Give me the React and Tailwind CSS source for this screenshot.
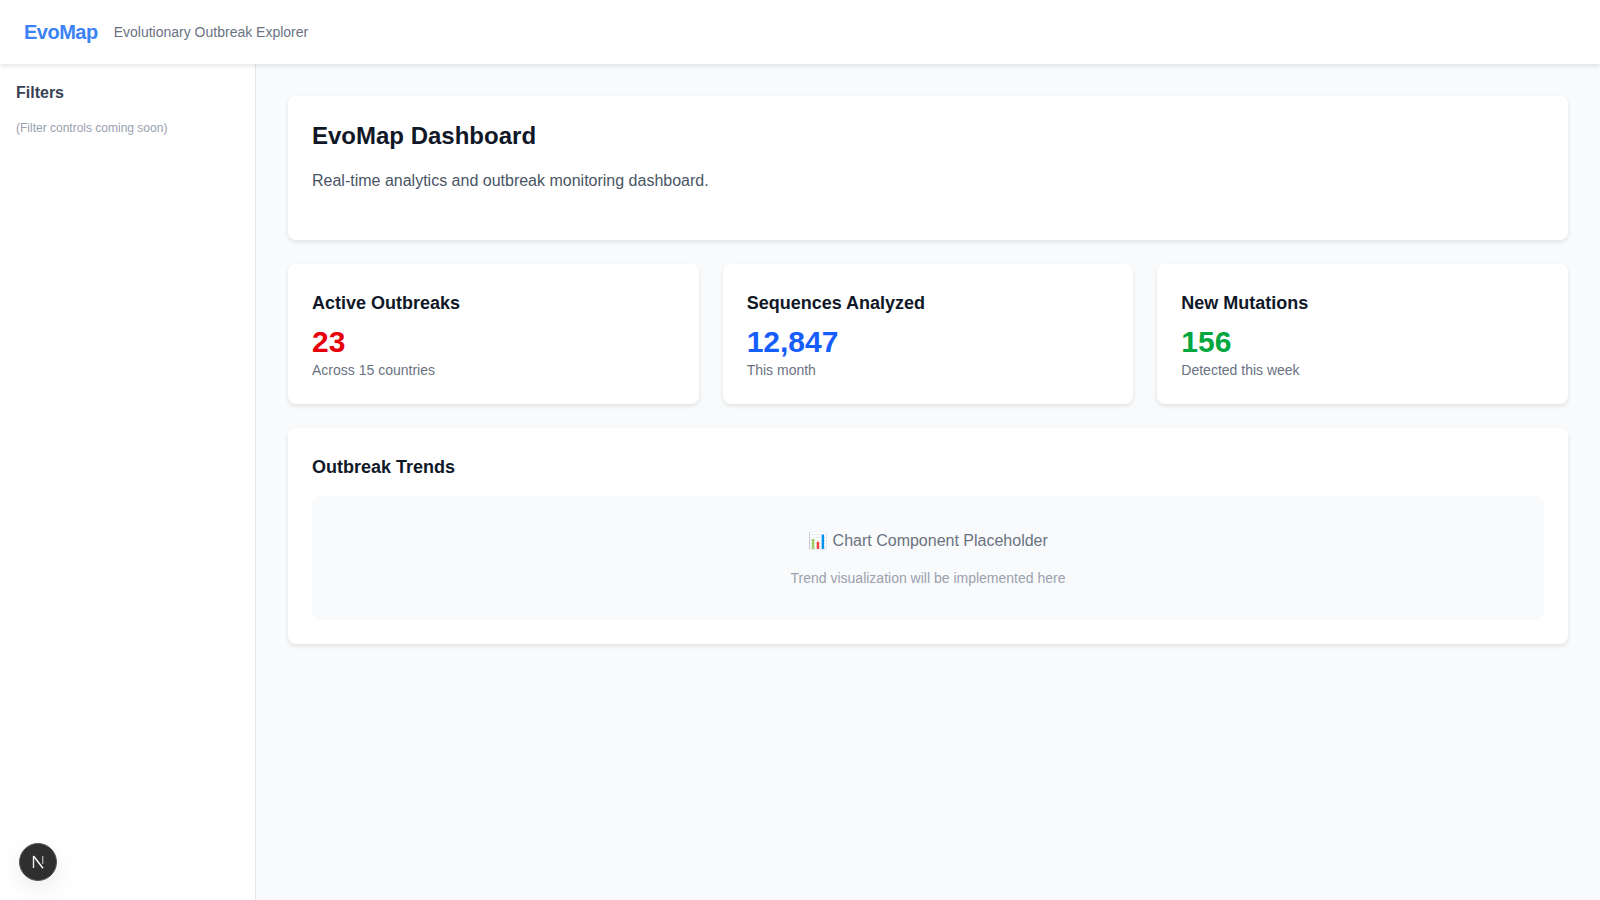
const stats = [
  { title: "Active Outbreaks", value: "23", note: "Across 15 countries", color: "text-red-600" },
  { title: "Sequences Analyzed", value: "12,847", note: "This month", color: "text-blue-600" },
  { title: "New Mutations", value: "156", note: "Detected this week", color: "text-green-600" },
];

const card = "bg-white rounded-lg shadow-[0_2px_4px_rgba(0,0,0,0.1)] p-6";

export default function App() {
  return (
    <div className="min-h-screen flex flex-col bg-gray-50 antialiased font-['Liberation_Sans',Arial,sans-serif]">
      {/* HEADER */}
      <header className="relative z-10 h-16 bg-white shadow-[0_2px_4px_rgba(0,0,0,0.1)] flex items-center px-6 gap-4 shrink-0">
        <h1 className="text-xl font-bold tracking-tight text-[#3b82f6]">EvoMap</h1>
        <span className="text-sm text-gray-500">Evolutionary Outbreak Explorer</span>
      </header>

      <div className="flex flex-1">
        {/* SIDEBAR */}
        <aside className="w-64 shrink-0 bg-white border-r border-gray-200 p-4">
          <h2 className="text-base leading-[26px] font-semibold text-gray-700 mb-[14px]">Filters</h2>
          <p className="text-xs text-gray-400">(Filter controls coming soon)</p>
        </aside>

        {/* MAIN */}
        <main className="flex-1 p-8 flex flex-col gap-6">
          <section className={card}>
            <h2 className="text-2xl font-bold text-gray-900 mb-4">EvoMap Dashboard</h2>
            <p className="leading-[26px] text-gray-600 mb-[22px]">Real-time analytics and outbreak monitoring dashboard.</p>
          </section>

          <div className="grid grid-cols-3 gap-6">
            {stats.map((s) => (
              <div key={s.title} className={card}>
                <h3 className="text-lg leading-[30px] font-semibold text-gray-900 mb-[6px]">{s.title}</h3>
                <p className={`text-3xl font-bold ${s.color}`}>{s.value}</p>
                <p className="text-sm text-gray-500">{s.note}</p>
              </div>
            ))}
          </div>

          <section className={card}>
            <h3 className="text-lg leading-[30px] font-semibold text-gray-900 mb-[14px]">Outbreak Trends</h3>
            <div className="bg-gray-50 rounded-lg p-8 text-center">
              <p className="leading-[26px] text-gray-500 mb-[14px]">📊 Chart Component Placeholder</p>
              <p className="text-sm text-gray-400">Trend visualization will be implemented here</p>
            </div>
          </section>
        </main>
      </div>

      {/* DEV INDICATOR */}
      <button className="fixed left-[19px] bottom-[19px] w-[38px] h-[38px] rounded-full bg-[#2f2f2f] border border-[#555] shadow-[0_8px_24px_rgba(0,0,0,0.08)] flex items-center justify-center">
        <svg width="16" height="16" viewBox="0 1 16 16" fill="none">
          <path d="M3.5 3v12" stroke="#eee" strokeWidth="1.4" />
          <path d="M3.5 3L13 15.3" stroke="#fff" strokeWidth="1.4" />
          <path d="M12.7 3v8" stroke="#aaa" strokeWidth="1.4" />
        </svg>
      </button>
    </div>
  );
}
